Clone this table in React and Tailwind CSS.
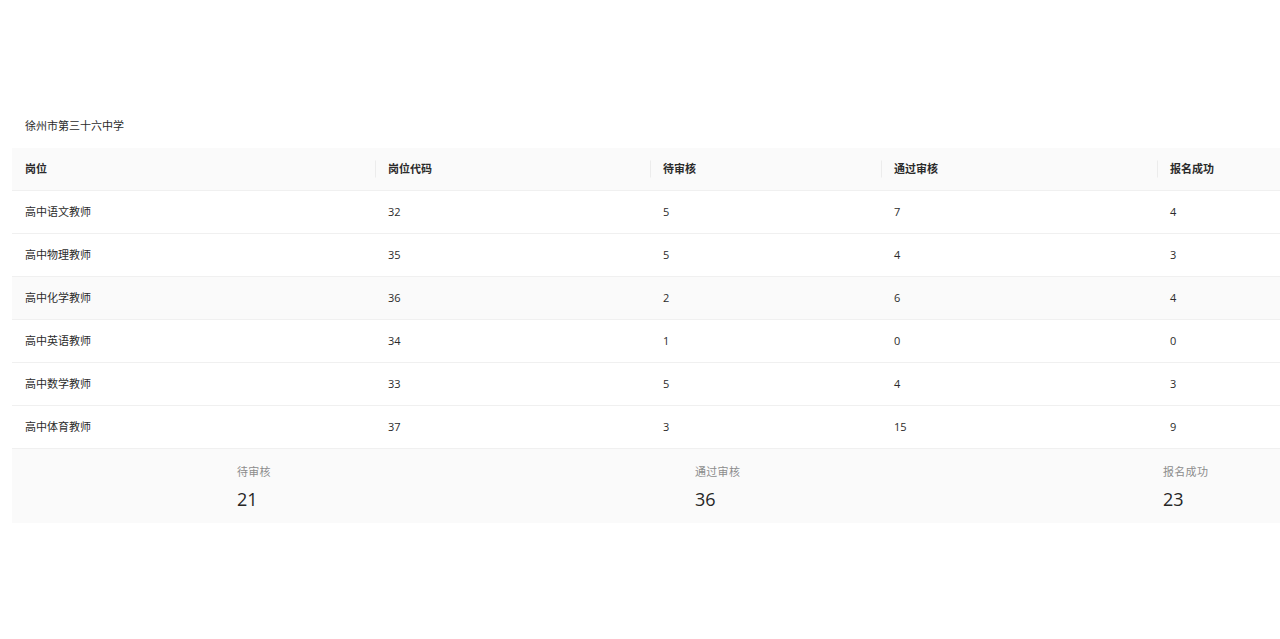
import React from "react";

const ROWS = [
  { name: "高中语文教师", code: 32, pending: 5, passed: 7, success: 4 },
  { name: "高中物理教师", code: 35, pending: 5, passed: 4, success: 3 },
  { name: "高中化学教师", code: 36, pending: 2, passed: 6, success: 4 },
  { name: "高中英语教师", code: 34, pending: 1, passed: 0, success: 0 },
  { name: "高中数学教师", code: 33, pending: 5, passed: 4, success: 3 },
  { name: "高中体育教师", code: 37, pending: 3, passed: 15, success: 9 },
];

const COLS = "grid grid-cols-[363px_275px_231px_276px_1fr]";

export default function App() {
  const totals = ROWS.reduce(
    (acc, r) => ({
      pending: acc.pending + r.pending,
      passed: acc.passed + r.passed,
      success: acc.success + r.success,
    }),
    { pending: 0, passed: 0, success: 0 }
  );

  return (
    <div
      className="min-h-screen bg-white pt-[112px] pl-[12px] text-[11px] text-[#2b2b2b]"
      style={{ fontFamily: '"Open Sans", "Noto Sans CJK SC", sans-serif' }}
    >
      {/* 学校名称 */}
      <div className="h-[28px] flex items-center pl-[13px]">徐州市第三十六中学</div>

      <div className="mt-[8px]">
        {/* 表头 */}
        <div className={`${COLS} h-[43px] bg-[#fafafa] border-b border-[#f0f0f0] font-bold`}>
          <HeadCell first>岗位</HeadCell>
          <HeadCell>岗位代码</HeadCell>
          <HeadCell>待审核</HeadCell>
          <HeadCell>通过审核</HeadCell>
          <HeadCell>报名成功</HeadCell>
        </div>

        {ROWS.map((r, i) => (
          <div
            key={r.code}
            className={`${COLS} h-[43px] border-b border-[#f0f0f0] ${i === 2 ? "bg-[#fafafa]" : ""}`}
          >
            <Cell>{r.name}</Cell>
            <Cell>{r.code}</Cell>
            <Cell>{r.pending}</Cell>
            <Cell>{r.passed}</Cell>
            <Cell>{r.success}</Cell>
          </div>
        ))}

        {/* 合计 */}
        <div className="grid grid-cols-[458px_468px_1fr] pl-[225px] h-[74px] bg-[#fafafa] pt-[15px]">
          <Stat title="待审核" value={totals.pending} />
          <Stat title="通过审核" value={totals.passed} />
          <Stat title="报名成功" value={totals.success} />
        </div>
      </div>
    </div>
  );
}

function HeadCell({ children, first }) {
  return (
    <div className="relative flex items-center pl-[13px]">
      {!first && <span className="absolute left-0 top-1/2 -translate-y-1/2 h-[17px] w-px bg-[#ececec]" />}
      {children}
    </div>
  );
}

function Cell({ children }) {
  return <div className="flex items-center pl-[13px]">{children}</div>;
}

function Stat({ title, value }) {
  return (
    <div>
      <div className="text-[#8c8c8c] leading-[16px] tracking-[0.3px]">{title}</div>
      <div className="text-[18px] leading-[26px] mt-[6px] text-[#262626]">{value}</div>
    </div>
  );
}
